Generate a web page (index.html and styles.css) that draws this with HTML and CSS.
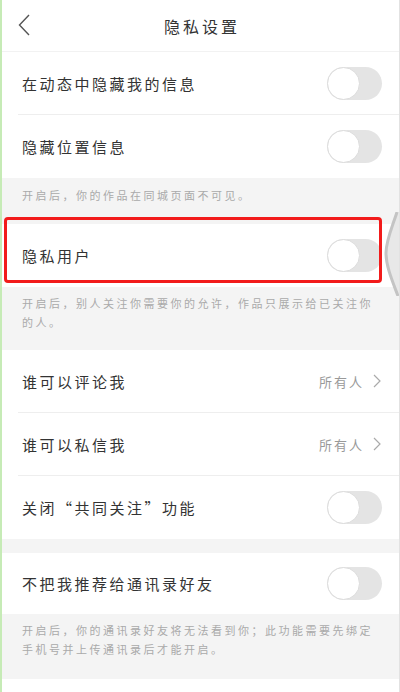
FILE: index.html
```html
<!DOCTYPE html>
<html lang="zh-CN">

<head>
    <meta charset="UTF-8">
    <meta name="viewport" content="width=device-width, initial-scale=1.0">
    <link rel="stylesheet" href="styles.css">
    <title>隐私设置</title>
</head>

<body>
    <main class="pagina">
        <header class="cabecalho">
            <a class="voltar" href="#">
                <svg width="12" height="22" viewBox="0 0 12 22">
                    <path d="M11 1 L1.5 11 L11 21" fill="none" stroke="#555" stroke-width="1.4" />
                </svg>
            </a>
            <h1>隐私设置</h1>
        </header>

        <section class="grupo">
            <div class="linha">
                <div class="linha_conteudo">
                    <p>在动态中隐藏我的信息</p>
                    <span class="chave"></span>
                </div>
            </div>
            <div class="linha">
                <div class="linha_conteudo sem-borda">
                    <p>隐藏位置信息</p>
                    <span class="chave"></span>
                </div>
            </div>
        </section>
        <p class="nota nota-curta">开启后，你的作品在同城页面不可见。</p>

        <section class="grupo">
            <div class="linha destaque">
                <div class="linha_conteudo sem-borda">
                    <p>隐私用户</p>
                    <span class="chave"></span>
                </div>
                <span class="moldura"></span>
            </div>
        </section>
        <p class="nota">开启后，别人关注你需要你的允许，作品只展示给已关注你的人。</p>

        <section class="grupo">
            <div class="linha">
                <div class="linha_conteudo">
                    <p>谁可以评论我</p>
                    <span class="opcao">所有人
                        <svg width="8" height="14" viewBox="0 0 8 14">
                            <path d="M1 1 L7 7 L1 13" fill="none" stroke="#aaa" stroke-width="1.2" />
                        </svg>
                    </span>
                </div>
            </div>
            <div class="linha">
                <div class="linha_conteudo">
                    <p>谁可以私信我</p>
                    <span class="opcao">所有人
                        <svg width="8" height="14" viewBox="0 0 8 14">
                            <path d="M1 1 L7 7 L1 13" fill="none" stroke="#aaa" stroke-width="1.2" />
                        </svg>
                    </span>
                </div>
            </div>
            <div class="linha">
                <div class="linha_conteudo sem-borda">
                    <p>关闭“共同关注”功能</p>
                    <span class="chave"></span>
                </div>
            </div>
        </section>
        <div class="espaco"></div>

        <section class="grupo">
            <div class="linha">
                <div class="linha_conteudo sem-borda curta">
                    <p>不把我推荐给通讯录好友</p>
                    <span class="chave"></span>
                </div>
            </div>
        </section>
        <p class="nota nota-final">开启后，你的通讯录好友将无法看到你；此功能需要先绑定手机号并上传通讯录后才能开启。</p>

        <svg class="aba" width="16" height="84" viewBox="0 0 16 84">
            <path d="M14 0 C10 13 3 28 3 41 C3 54 9 68 15 84 L16 84 L16 0 Z" fill="#e8e8e8" />
            <path d="M14 0 C10 13 3 28 3 41 C3 54 9 68 15 84" fill="none" stroke="#c4c4c4" stroke-width="3" />
        </svg>
    </main>
</body>

</html>
```

FILE: styles.css
```css
body,
h1,
p {
    margin: 0;
    padding: 0;
}

body {
    font-family: "Noto Sans CJK SC", "Noto Sans", sans-serif;
    background-color: #FFF;
    color: #333;
}

.pagina {
    position: relative;
    width: 400px;
    height: 692px;
    box-sizing: border-box;
    border-left: 2px solid #c6ebb6;
    border-right: 1px solid #e2e2e2;
    overflow: hidden;
}

/* Cabecalho */
.cabecalho {
    height: 51px;
    display: flex;
    align-items: center;
    justify-content: center;
    position: relative;
    border-bottom: 1px solid #f2f2f2;
}

.cabecalho h1 {
    font-size: 16px;
    font-weight: normal;
    letter-spacing: 3px;
    margin-left: 3px;
    color: #333;
}

.voltar {
    position: absolute;
    left: 16px;
    top: 14px;
    display: flex;
}

/* Linhas */
.grupo {
    background-color: #FFF;
}

.linha {
    padding-left: 16px;
    position: relative;
}

.linha_conteudo {
    height: 63px;
    box-sizing: border-box;
    display: flex;
    align-items: center;
    justify-content: space-between;
    padding-left: 4px;
    padding-right: 17px;
    border-bottom: 1px solid #eee;
}

.linha_conteudo.sem-borda {
    border-bottom: none;
}

.linha_conteudo.curta {
    height: 61px;
}

.linha_conteudo p {
    font-size: 15px;
    letter-spacing: 2.5px;
    color: #333;
}

.chave {
    width: 55px;
    height: 33px;
    border-radius: 17px;
    background-color: #e4e4e4;
    position: relative;
}

.chave::before {
    content: "";
    position: absolute;
    left: 0;
    top: 0;
    width: 31px;
    height: 31px;
    border-radius: 50%;
    background-color: #FFF;
    border: 1px solid #dcdcdc;
}

.opcao {
    display: flex;
    align-items: center;
    gap: 9px;
    font-size: 13px;
    letter-spacing: 2px;
    color: #999;
    margin-right: 1px;
}

/* Destaque vermelho */
.moldura {
    position: absolute;
    left: 2px;
    right: 17px;
    top: -7px;
    bottom: 4px;
    border: 3px solid #f21b1b;
    border-radius: 4px;
}

/* Notas */
.nota {
    background-color: #f4f4f4;
    font-size: 11px;
    letter-spacing: 2.5px;
    line-height: 19px;
    color: #aaa;
    padding: 7px 20px 18px 20px;
}

.nota.nota-curta {
    padding-top: 8px;
    padding-bottom: 19px;
}

.nota.nota-final {
    padding-bottom: 20px;
}

.espaco {
    height: 14px;
    background-color: #f4f4f4;
}

.aba {
    position: absolute;
    right: 0;
    top: 212px;
}
```
